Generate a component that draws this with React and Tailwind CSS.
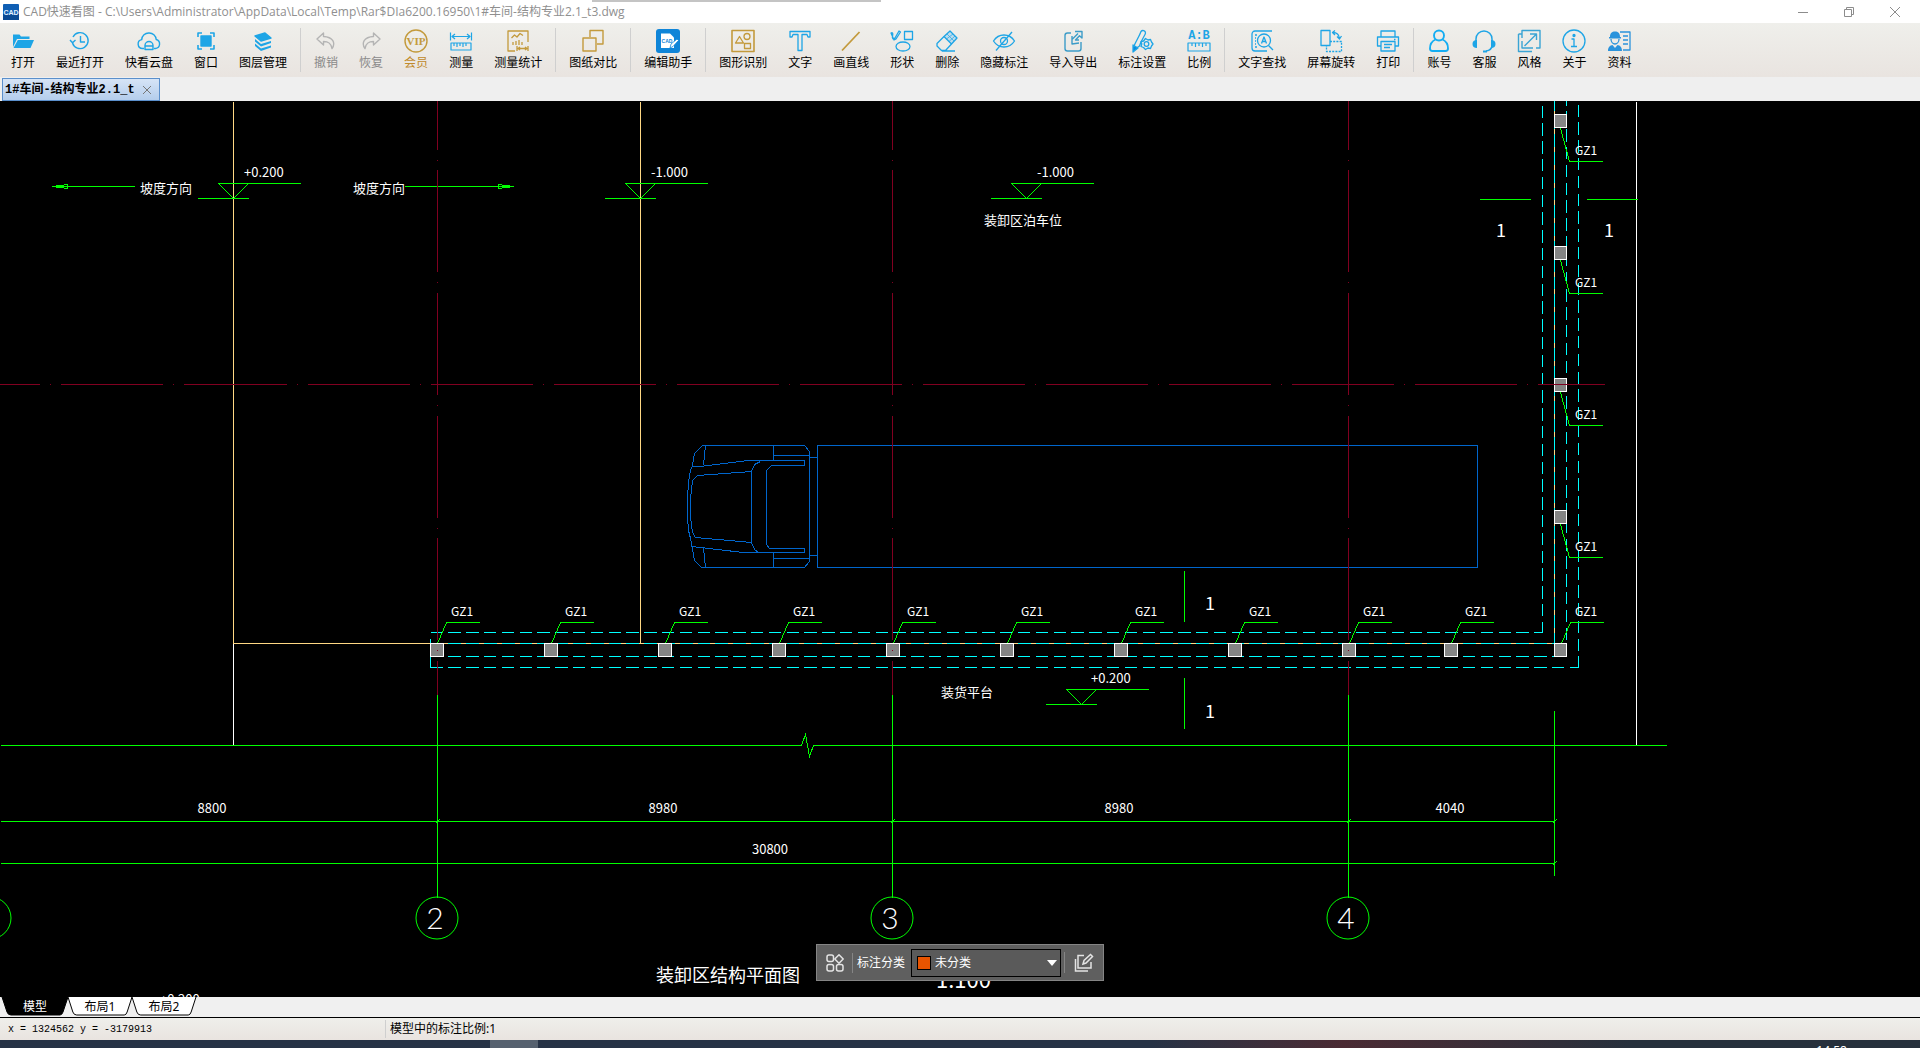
import React, { useState } from "react";

const BLUE = "#1ea5e6";
const GOLD = "#c39a3c";
const GRAY = "#b4b4b4";

function Icon({ color = BLUE, width = 1.4, children }) {
  return (
    <svg viewBox="0 0 24 24" className="h-6 w-6" fill="none" stroke={color} strokeWidth={width} strokeLinejoin="round" aria-hidden="true">
      {children}
    </svg>
  );
}

const ICONS = {
  open: (
    <Icon>
      <path d="M2 18V5.500h6.500l1.500 2h8.500V10H6z" fill={BLUE} stroke="none" />
      <path d="M6.800 11H23l-3.500 8H2.500z" fill={BLUE} stroke="none" />
    </Icon>
  ),
  recent: (
    <Icon>
      <path d="M5 8a8 8 0 1 1-.5 6" />
      <path d="M2 11l2.500 2.800L7.500 11" />
      <path d="M12.500 7v6h4.500" />
    </Icon>
  ),
  cloud: (
    <Icon>
      <path d="M7 19.500H5.500a4.500 4.500 0 0 1-.8-8.900A7 7 0 0 1 12 4a7 7 0 0 1 7.200 6.500 4.600 4.600 0 0 1-.7 9H17" />
      <path d="M8 20.500v-4a4 4 0 0 1 8 0v4zM8 17h8" />
    </Icon>
  ),
  window: (
    <Icon>
      <rect x="7" y="7" width="10" height="10" fill={BLUE} />
      <path d="M4 8V4h4M16 4h4v4M20 16v4h-4M8 20H4v-4" strokeWidth="1.6" />
    </Icon>
  ),
  layers: (
    <Icon>
      <path d="M4 7l10-3 6 5-10 3z" fill={BLUE} />
      <path d="M4 10l6 5 10-3v2l-10 3.500L4 12.500zM4 14.500l6 5 10-3v2L10 22l-6-5z" fill={BLUE} stroke="none" />
    </Icon>
  ),
  undo: (
    <Icon color={GRAY}>
      <path d="M9.500 4L3 10l6.500 6v-3.500c5 0 7.500 1.500 8.500 7C22 14 19 8 9.500 7.500z" />
    </Icon>
  ),
  redo: (
    <Icon color={GRAY}>
      <path d="M14.500 4L21 10l-6.500 6v-3.500c-5 0-7.500 1.500-8.500 7C2 14 5 8 14.500 7.500z" />
    </Icon>
  ),
  vip: (
    <Icon color={GOLD}>
      <circle cx="12" cy="12" r="11" />
      <text x="12" y="16" textAnchor="middle" fontSize="11" fontWeight="700" fill={GOLD} stroke="none" className="font-['Liberation_Serif',serif]">VIP</text>
    </Icon>
  ),
  measure: (
    <Icon width={1.2}>
      <path d="M1.500 3.500v8M22.500 3.500v8M3 7.500h18M6 5L3 7.500 6 10M18 5l3 2.500-3 2.500" />
      <path d="M2 14h20v7H2zM5 14v3M8 14v4M11 14v3M14 14v4M17 14v3" />
    </Icon>
  ),
  stats: (
    <Icon color={GOLD} width={1.3}>
      <path d="M9 22H2V2h20v11" />
      <path d="M5.500 9l3-3 2.500 2 3-3.500 3 2M7 16v-3M10 16v-4M13 16v-5M16 16v-3" />
      <path d="M11 17v5M22 17v5M12 19.500h9M14 18l-2 1.500 2 1.500M19 18l2 1.500-2 1.500" />
    </Icon>
  ),
  compare: (
    <Icon color={GOLD}>
      <path d="M9 8V1.500h13V15h-6" />
      <path d="M2 9h13v13H2z" />
    </Icon>
  ),
  assistant: (
    <Icon>
      <rect x="0" y="0" width="24" height="24" rx="3" fill="#0f85d8" stroke="none" />
      <path d="M5 4.500h9l4 4V19H5z" fill="#fff" stroke="none" />
      <text x="11" y="14" textAnchor="middle" fontSize="5" fontWeight="700" fill="#0f85d8" stroke="none" className="font-['Liberation_Sans',sans-serif]">CAD</text>
      <path d="M14 19l1-4 6-5 1.500 1.500-5.500 6z" fill="#fff" stroke="#0f85d8" strokeWidth="0.8" />
    </Icon>
  ),
  shapes: (
    <Icon color={GOLD} width={1.3}>
      <rect x="1" y="1.500" width="22" height="21" strokeWidth="1.600" />
      <path d="M4.500 14L8.500 7.500l4 6.500z" />
      <circle cx="16" cy="7.500" r="3" />
      <rect x="13.500" y="14.500" width="6" height="5" />
    </Icon>
  ),
  text: (
    <Icon width={1.3}>
      <path d="M2 2.500h20V8h-2l-1-2.500h-5V21.500h-4V5.500H5L4 8H2z" />
    </Icon>
  ),
  line: (
    <Icon color={GOLD} width={1.8}>
      <path d="M3 21.500L20.500 3" />
    </Icon>
  ),
  draw: (
    <Icon width={1.3}>
      <path d="M1 4c2-1 2 1 1.500 3S3 11 5 9l4-7 1.500 1-4.500 7-2 1z" />
      <rect x="14.500" y="2.500" width="8" height="8" />
      <ellipse cx="13" cy="17.500" rx="7" ry="4.500" />
    </Icon>
  ),
  erase: (
    <Icon width={1.3}>
      <path d="M9 7.500L15 2l7 7-5.500 6z" fill="#bfdcec" />
      <path d="M9 7.500L2 14.500V17l4.500 4.500h4l6-6.500M7 22h13" />
      <path d="M12 5l7 7M18 5l-6.500 5M20 7l-6 5.500" strokeWidth="0.7" />
    </Icon>
  ),
  hide: (
    <Icon width={1.3}>
      <path d="M1.500 12c5-8 16-8 21 0-5 8-16 8-21 0z" />
      <circle cx="12" cy="12" r="3.500" />
      <path d="M4 21.500L20 3" />
    </Icon>
  ),
  transfer: (
    <Icon width={1.4} color="#3c9cc8">
      <path d="M10 4H6.500A2.500 2.500 0 0 0 4 6.500v13A2.500 2.500 0 0 0 6.500 22h11a2.500 2.500 0 0 0 2.500-2.500V13" />
      <path d="M14 2.500h7V9l-2.500-2.300-4 4.300h3.500M17 4.500L11 10.500V7M11 10.500V15l7-1" />
    </Icon>
  ),
  settings: (
    <Icon width={1.3}>
      <path d="M11 2.500a2.500 2.500 0 0 1 4.500 1.500c0 2-4 6-6 13L5 20 4 17C6 12 9 8 11 2.500z" />
      <path d="M3 16l5 3-5 4z" fill="#0b8be0" />
      <path d="M15.500 9.500l2.500 1.500 2.500-.5 1 2.500 1.500 2-1.500 2-1 2.500-2.500-.5-2.500 1.500-2-2-2.500-1 .8-2.500-.8-2.500 2.500-.5z" fill="#ecebe8" />
      <circle cx="16.500" cy="15" r="2.300" />
    </Icon>
  ),
  scale: (
    <Icon width={1.2}>
      <text x="12" y="9.500" textAnchor="middle" fontSize="12" fontWeight="700" fill={BLUE} stroke="none" className="font-['Liberation_Mono',monospace]">A:B</text>
      <path d="M1 14h22v8H1zM5 14v3M8.500 14v4M12 14v3M15.500 14v4M19 14v3" />
    </Icon>
  ),
  find: (
    <Icon width={1.3}>
      <path d="M22 2H5a3 3 0 0 0-3 3v14a3 3 0 0 0 3 3h12M5 6h2M5 9h1M5 12h1M5 15h1M5 18h2" />
      <circle cx="14" cy="11.500" r="6.500" />
      <path d="M18.500 16.500L23 21M11.500 14.500L14 8l2.500 6.500M12.500 12.500h3" />
    </Icon>
  ),
  rotate: (
    <Icon width={1.3}>
      <rect x="2" y="1.500" width="9" height="15" />
      <path d="M14 3.500c4 0 6 2 6.500 6M16 1.500l-2.500 2 2.500 2.500M18 7.500l2.500 2.500 2-3" />
      <path d="M11 12.500h11.500v10H7.500v-6" strokeDasharray="2 1.200" />
    </Icon>
  ),
  print: (
    <Icon width={1.3}>
      <path d="M5 8V2h14v6M5 17H1.500V8h21v9H19" />
      <path d="M5 12.500h14V22H5zM8 15.500h8M8 18.500h6M18 10.500h1.500" />
    </Icon>
  ),
  account: (
    <Icon width={1.9} color="#15adf2">
      <circle cx="12" cy="6.500" r="5" />
      <path d="M8.500 10.500C4 12.500 3 16 3 19.500c0 2 .5 2.500 2.500 2.500h13c2 0 2.500-.5 2.500-2.500 0-3.500-1-7-5.500-9" />
    </Icon>
  ),
  service: (
    <Icon width={1.5}>
      <path d="M4 14V10a8 8 0 0 1 16 0v6c0 4-2 5.500-6 6" />
      <path d="M5 11v8c-3 0-4.500-1.500-4.500-4S2 11 5 11zM19 11v8c3 0 4.500-1.500 4.500-4S22 11 19 11z" fill={BLUE} stroke="none" />
      <path d="M11 22.500h4" strokeWidth="2" />
    </Icon>
  ),
  style: (
    <Icon width={1.4} color="#3aa4d4">
      <path d="M5 9V1.500h18V19h-4M1.500 5v17.500H15M1.500 5H5M5 12v7h11" />
      <path d="M7.500 17L19 5.500M13 5h6.500v6" />
    </Icon>
  ),
  about: (
    <Icon width={1.3}>
      <circle cx="12" cy="12" r="11" />
      <path d="M9.500 10H12v7.500M9 17.500h6" />
      <circle cx="12" cy="6.500" r="1" fill={BLUE} />
    </Icon>
  ),
  docs: (
    <Icon width={1.3} color="#2a93dc">
      <path d="M13 3h10v18H16M16 7h5M16 11h5M16 15h5" />
      <path d="M3 8c0-4 2-5.500 5-5.500S13 4 13 8h1v1.500H2V8zM1 22c0-4 2-5.500 4.500-6L8 19l2.500-3c2.500.5 4.500 2 4.500 6z" fill="#2a93dc" stroke="none" />
      <path d="M4 10c0 3 2 5 4 5s4-2 4-5" />
    </Icon>
  ),
};

const TOOL_GROUPS = [
  [["open", "打开"], ["recent", "最近打开"], ["cloud", "快看云盘"], ["window", "窗口"], ["layers", "图层管理"]],
  [["undo", "撤销", "text-[#8a8a8a]"], ["redo", "恢复", "text-[#8a8a8a]"], ["vip", "会员", "text-[#c08a2c]"], ["measure", "测量"], ["stats", "测量统计"]],
  [["compare", "图纸对比"]],
  [["assistant", "编辑助手"]],
  [["shapes", "图形识别"], ["text", "文字"], ["line", "画直线"], ["draw", "形状"], ["erase", "删除"], ["hide", "隐藏标注"], ["transfer", "导入导出"], ["settings", "标注设置"], ["scale", "比例"]],
  [["find", "文字查找"], ["rotate", "屏幕旋转"], ["print", "打印"]],
  [["account", "账号"], ["service", "客服"], ["style", "风格"], ["about", "关于"], ["docs", "资料"]],
];

function TitleBar() {
  return (
    <header className="relative flex h-[23px] shrink-0 items-center bg-white pr-0.5 pl-[3px]">
      <div className="absolute left-[592px] top-0 h-0.5 w-[289px] bg-[#c4c4c4] shadow-md" />
      <svg viewBox="0 0 16 16" className="h-4 w-4" aria-hidden="true">
        <rect width="16" height="16" rx="1" fill="#0f5fb4" />
        <path d="M0 10h16v6H0z" fill="#0b4a94" />
        <text x="8" y="11" textAnchor="middle" fontSize="7" fontWeight="700" fill="#e6f2ff" className="font-['Liberation_Sans',sans-serif]">CAD</text>
      </svg>
      <h1 className="ml-1 flex-1 whitespace-nowrap font-['Open_Sans','Noto_Sans_CJK_SC',sans-serif] text-[12px] leading-4 text-[#8f8f8f]">
        CAD快速看图 - C:\Users\Administrator\AppData\Local\Temp\Rar$DIa6200.16950\1#车间-结构专业2.1_t3.dwg
      </h1>
      <div className="flex">
        <button aria-label="最小化" className="flex h-5 w-[46px] items-center justify-center">
          <svg viewBox="0 0 10 10" className="h-2.5 w-2.5" stroke="#8c8c8c"><path d="M0 5.500h10" /></svg>
        </button>
        <button aria-label="还原" className="flex h-5 w-[46px] items-center justify-center">
          <svg viewBox="0 0 10 10" className="h-2.5 w-2.5" stroke="#8c8c8c" fill="none"><path d="M.5 2.500h7v7h-7zM2.500 2V.5h7v7H8" /></svg>
        </button>
        <button aria-label="关闭" className="flex h-5 w-[46px] items-center justify-center">
          <svg viewBox="0 0 10 10" className="h-2.5 w-2.5" stroke="#8c8c8c"><path d="M0 0l10 10M10 0L0 10" /></svg>
        </button>
      </div>
    </header>
  );
}

function Toolbar() {
  return (
    <nav className="flex h-[54px] shrink-0 bg-linear-to-b from-[#efefeb] to-[#e9e4e0] pt-[5px] pl-[11px]">
      {TOOL_GROUPS.map((group, i) => (
        <div key={i} className={`flex h-11 gap-[21px] ${i ? "ml-[13px] border-l border-[#cfcfcf] pl-[13px]" : ""}`}>
          {group.map(([icon, label, tone]) => (
            <button key={label} className={`flex flex-col items-center gap-[2px] pt-px text-[12px] leading-4 whitespace-nowrap ${tone || "text-black"}`}>
              {ICONS[icon]}
              {label}
            </button>
          ))}
        </div>
      ))}
    </nav>
  );
}

function FileTabs() {
  return (
    <div className="flex h-6 shrink-0 items-start bg-[#efefef] pt-px pl-0.5">
      <div className="flex h-[23px] w-[158px] items-center justify-between border border-[#5b8fcb] bg-linear-to-b from-[#d6e4f6] to-[#b4cdec] pr-2 pl-0.5">
        <span className="whitespace-nowrap font-['Liberation_Mono','Noto_Sans_CJK_SC',monospace] text-[12px] font-bold leading-4 text-black">1#车间-结构专业2.1_t</span>
        <button aria-label="关闭标签">
          <svg viewBox="0 0 8 8" className="h-2 w-2" stroke="#777"><path d="M0 0l8 8M8 0L0 8" /></svg>
        </button>
      </div>
    </div>
  );
}

const BOTTOM_COLUMNS = [430, 544, 658, 772, 886, 1000, 1114, 1228, 1342, 1444, 1554];
const SIDE_COLUMNS = [114, 246, 378, 510];
const AXES = [[437, "2"], [892, "3"], [1348, "4"]];
const LEVELS = [
  [218, 183, "+0.200", 244],
  [625, 183, "-1.000", 651],
  [1011, 183, "-1.000", 1037],
  [1066, 689, "+0.200", 1091],
];
const LABELS = [
  [140, 193, 13, "坡度方向"],
  [353, 193, 13, "坡度方向"],
  [984, 225, 13, "装卸区泊车位"],
  [941, 697, 13, "装货平台"],
  [656, 982, 18, "装卸区结构平面图"],
  [936, 988, 22, "1:100"],
  [160, 1004, 13, "+0.200"],
];
const SECTION_MARKS = [[1496, 237], [1604, 237], [1205, 610], [1205, 718]];
const DIMENSIONS = [[212, 813, "8800"], [663, 813, "8980"], [1119, 813, "8980"], [1450, 813, "4040"], [770, 854, "30800"]];

function Drawing() {
  return (
    <svg viewBox="0 101 1920 896" preserveAspectRatio="xMinYMin slice" className="block h-full w-full font-['Noto_Sans_CJK_SC',sans-serif]" role="img" aria-label="装卸区结构平面图">
      <g transform="translate(.5 .5)" fill="none" shapeRendering="crispEdges">
        <path stroke="#ffd884" d="M233 101V643H1554V101M640 101V643" />
        <path stroke="#fff" d="M233 643V745M1636 101V745" />

        <g stroke="#00ffff" strokeDasharray="12.4 5.400">
          <path d="M430 632H1542M430 656H1554M430 667H1578" />
          <path d="M1542 105V632M1566 93V643M1578 104V667" />
          <path d="M430 638V667" strokeDasharray="none" />
          <path d="M430 643H1554M1554 98V643" strokeDasharray="12.800 5" />
        </g>

        <g stroke="#0066cc">
          <path d="M817 445H1477V567H817z" />
          <path d="M702 445H804L809 451V561L804 567H701L694 560L692 548L690 538L688 530L687 516V497L688 482L690 470L692 465L694 453z" />
          <path d="M705 445L703 465M703 547L705 567" />
          <path d="M691 466L700 466L748 460H804V465H771L766 470V544L769 548H804V552H743L691 546" />
          <path d="M751 471L697 475L692 480L690 498V516L692 532L695 537L751 542zM751 471L754 464L760 461M751 542L754 549L758 552" />
          <path d="M773 445V460M773 455H809M773 552V567M773 558H809M809 457H817M809 555H817" />
        </g>

        <g stroke="#00ff00">
          <path d="M0 745H801L805 734L809 756L813 745H1666M0 821H1554M0 863H1554M1554 710V875" />
          <path d="M435 823L439 819M890 823L894 819M1346 823L1350 819M1552 823L1556 819M1552 865L1556 861" />
          <path d="M1479 199H1530M1586 199H1637M1184 570V621M1184 677V728" />
          <path d="M52 186H134M52 186L67 184V188L52 186M404 186H513M513 186L498 184V188L513 186" />
          {LEVELS.map(([x, y]) => (
            <path key={`${x}-${y}`} d={`M${x} ${y}h82M${x} ${y}l15 15l15 -15M${x - 21} ${y + 15}h51`} />
          ))}
          {AXES.map(([x]) => (
            <path key={x} d={`M${x} 694V897`} />
          ))}
        </g>

        {BOTTOM_COLUMNS.map((x) => (
          <g key={x}>
            <rect x={x} y="643" width={x === 1554 ? 12 : 13} height="13" fill="#848484" stroke="#fff" />
            <path d={`M${x + 7} 643L${x + 16} 622H${x + 49}`} stroke="#00ff00" />
          </g>
        ))}
        {SIDE_COLUMNS.map((y) => (
          <g key={y}>
            <rect x="1554" y={y} width="12" height="13" fill="#848484" stroke="#fff" />
            <path d={`M1560 ${y + 14}L1569 ${y + 47}H1602`} stroke="#00ff00" />
          </g>
        ))}

        <g stroke="#800020">
          {AXES.map(([x]) => (
            <path key={x} d={`M${x} 47V694`} strokeDasharray="102 10 1 9.700" />
          ))}
          <path d="M-62 384H1604" strokeDasharray="102 10 1 10" />
        </g>
      </g>

      <g fill="none" stroke="#00ff00">
        <circle cx="-10" cy="918" r="21" />
        {AXES.map(([x]) => (
          <circle key={x} cx={x} cy="918" r="21" />
        ))}
      </g>

      <g fill="#fff">
        {AXES.map(([x, name]) => (
          <text key={name} x={x - 2} y="929" textAnchor="middle" className="font-['Lato',sans-serif] text-[30px] font-light">{name}</text>
        ))}
        {BOTTOM_COLUMNS.map((x) => (
          <text key={x} x={x + 21} y="616" className="text-[12px]">GZ1</text>
        ))}
        {SIDE_COLUMNS.map((y) => (
          <text key={y} x="1575" y={y + 41} className="text-[12px]">GZ1</text>
        ))}
        {LEVELS.map(([x, y, value, tx]) => (
          <text key={`${x}-${y}`} x={tx} y={y - 6} className="text-[13px]">{value}</text>
        ))}
        {DIMENSIONS.map(([x, y, value]) => (
          <text key={x} x={x} y={y} textAnchor="middle" className="text-[13px]">{value}</text>
        ))}
        {SECTION_MARKS.map(([x, y]) => (
          <text key={`${x}-${y}`} x={x} y={y} className="text-[18px]">1</text>
        ))}
        {LABELS.map(([x, y, size, value]) => (
          <text key={`${x}-${y}`} x={x} y={y} fontSize={size}>{value}</text>
        ))}
      </g>
    </svg>
  );
}

function CategoryBar() {
  const [category, setCategory] = useState("none");
  return (
    <div className="absolute bottom-4 left-1/2 flex h-[37px] w-72 -translate-x-1/2 items-center border border-[#858585] bg-[#5f5f5f] text-[12px] text-white">
      <button aria-label="分类管理" className="flex w-[35px] justify-center">
        <svg viewBox="0 0 18 18" className="h-[18px] w-[18px]" fill="none" stroke="#e4e4e4" strokeWidth="1.5">
          <rect x="1" y="1" width="6.500" height="6.500" rx="2" />
          <path d="M13 .8L17.200 5 13 9.200 8.800 5z" strokeLinejoin="round" />
          <rect x="1" y="10.500" width="6.500" height="6.500" rx="2" />
          <rect x="10.500" y="10.500" width="6.500" height="6.500" rx="2" />
        </svg>
      </button>
      <label htmlFor="category" className="border-l border-[#858585] pl-1 leading-5">标注分类</label>
      <div className="relative ml-1.5 h-7 w-[150px]">
        <select id="category" value={category} onChange={(e) => setCategory(e.target.value)} className="h-full w-full appearance-none border border-black bg-[#5a5a5a] pl-[23px] text-white">
          <option value="none">未分类</option>
        </select>
        <span className="pointer-events-none absolute top-[7px] left-1.5 h-3.5 w-3.5 border border-black bg-[#e85400]" />
        <svg viewBox="0 0 10 6" className="pointer-events-none absolute top-[11px] right-1 h-1.5 w-2.5" fill="#fff"><path d="M0 0h10L5 6z" /></svg>
      </div>
      <button aria-label="编辑分类" className="ml-[3px] flex h-[21px] flex-1 items-center justify-center border-l border-[#858585]">
        <svg viewBox="0 0 20 20" className="h-5 w-5" fill="none" stroke="#e4e4e4" strokeWidth="1.500">
          <path d="M10 2.500H4V15h13V9M1.500 6v12H14" />
          <path d="M9 11l1-3.500 6.500-6 2 2-6.500 6.500z" />
        </svg>
      </button>
    </div>
  );
}

const SHEETS = ["模型", "布局1", "布局2"];

function SheetTabs({ active, onSelect }) {
  return (
    <div className="flex h-[21px] shrink-0 items-start border-b border-black bg-[#f0f0f0] pl-0.5">
      {SHEETS.map((name, i) => (
        <button key={name} onClick={() => onSelect(i)} className={`relative h-[19px] text-[12px] leading-[18px] ${i ? "w-16" : "w-[66px]"} ${active === i ? "text-white" : "text-black"}`}>
          <svg viewBox="0 0 66 19" preserveAspectRatio="none" className="absolute inset-0 h-full w-full overflow-visible" aria-hidden="true">
            <path d="M0 0L5 15Q6 18 9 18H58Q60 18 61 15L66 0" fill={active === i ? "#000" : "#fff"} stroke="#000" />
          </svg>
          <span className="relative">{name}</span>
        </button>
      ))}
    </div>
  );
}

export default function App() {
  const [sheet, setSheet] = useState(0);

  return (
    <div className="flex h-screen flex-col overflow-hidden font-['Noto_Sans','Noto_Sans_CJK_SC',sans-serif]">
      <TitleBar />
      <Toolbar />
      <FileTabs />
      <main className="relative min-h-0 flex-1 overflow-hidden bg-black">
        <Drawing />
        <CategoryBar />
      </main>
      <SheetTabs active={sheet} onSelect={setSheet} />
      <footer className="flex h-[22px] shrink-0 items-center bg-linear-to-b from-[#efefeb] to-[#e9e4e0] pl-2 text-[12px] text-black">
        <span className="w-[377px] whitespace-pre font-['Liberation_Mono',monospace] text-[10px]">x = 1324562 y = -3179913</span>
        <span className="border-l border-[#cfcfcf] pl-1 leading-[18px]">模型中的标注比例:1</span>
      </footer>
      <div className="flex h-2 shrink-0 justify-between overflow-hidden bg-linear-to-r from-[#263245] from-60% via-[#4a2a33] via-70% to-[#26303c] to-85%">
        <span className="ml-[490px] w-12 bg-[#56616f]" />
        <time className="mr-[73px] pt-[3px] text-[12px] leading-4 text-white">14:58</time>
      </div>
    </div>
  );
}
